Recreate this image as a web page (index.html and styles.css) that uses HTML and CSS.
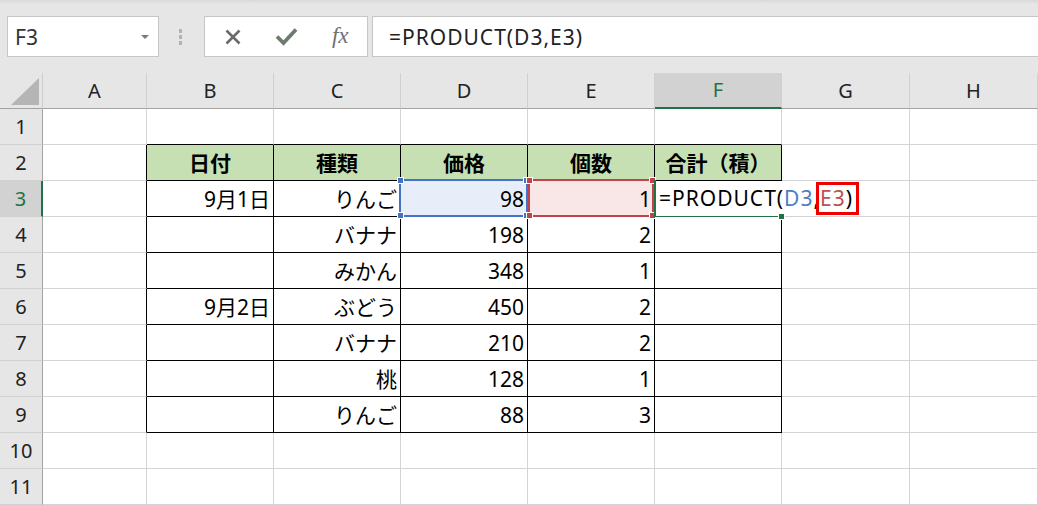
FILE: index.html
```html
<!DOCTYPE html>
<html lang="ja">
<head>
    <meta charset="UTF-8">
    <title>PRODUCT関数</title>
    <link rel="stylesheet" href="styles.css">
</head>
<body>
    <div class="toolbar">
        <div class="namebox">F3<span class="arrow"></span></div>
        <div class="grip"><i></i><i></i><i></i></div>
        <div class="fxbtns">
            <span>
                <svg width="16" height="16" viewBox="0 0 16 16"><path d="M1.5 1.5 L14.5 14.5 M14.5 1.5 L1.5 14.5" stroke="#6b6b6b" stroke-width="2.6" fill="none"/></svg>
            </span>
            <span>
                <svg width="23" height="19" viewBox="0 0 23 19"><path d="M2 9.5 L8.5 16 L21 2.5" stroke="#6e7b6e" stroke-width="3.8" fill="none"/></svg>
            </span>
            <span class="fx">fx</span>
        </div>
        <div class="formula">=PRODUCT(D3,E3)</div>
    </div>

    <div class="sheet">
        <!-- column headers -->
        <div class="corner"></div>
        <div class="ch">A</div>
        <div class="ch">B</div>
        <div class="ch">C</div>
        <div class="ch">D</div>
        <div class="ch">E</div>
        <div class="ch sel">F</div>
        <div class="ch">G</div>
        <div class="ch">H</div>

        <!-- row 1 -->
        <div class="rh">1</div>
        <div class="c"></div>
        <div class="c tt"></div>
        <div class="c tt"></div>
        <div class="c tt"></div>
        <div class="c tt"></div>
        <div class="c tt"></div>
        <div class="c"></div>
        <div class="c"></div>

        <!-- row 2 -->
        <div class="rh">2</div>
        <div class="c tl"></div>
        <div class="c t hd">日付</div>
        <div class="c t hd">種類</div>
        <div class="c t hd">価格</div>
        <div class="c t hd">個数</div>
        <div class="c t hd">合計（積）</div>
        <div class="c"></div>
        <div class="c"></div>

        <!-- row 3 -->
        <div class="rh sel">3</div>
        <div class="c tl"></div>
        <div class="c t">9月1日</div>
        <div class="c t">りんご</div>
        <div class="c t ref ref-d">98<i class="k k1"></i><i class="k k2"></i><i class="k k3"></i><i class="k k4"></i></div>
        <div class="c t ref ref-e">1<i class="k k1"></i><i class="k k2"></i><i class="k k3"></i><i class="k k4"></i></div>
        <div class="c t active">
            <span class="editor">=PRODUCT(<span class="cd">D3</span>,<span class="mark"><span class="ce">E3</span>)</span></span>
            <i class="fill"></i>
        </div>
        <div class="c"></div>
        <div class="c"></div>

        <!-- row 4 -->
        <div class="rh">4</div>
        <div class="c tl"></div>
        <div class="c t"></div>
        <div class="c t">バナナ</div>
        <div class="c t">198</div>
        <div class="c t">2</div>
        <div class="c t"></div>
        <div class="c"></div>
        <div class="c"></div>

        <!-- row 5 -->
        <div class="rh">5</div>
        <div class="c tl"></div>
        <div class="c t"></div>
        <div class="c t">みかん</div>
        <div class="c t">348</div>
        <div class="c t">1</div>
        <div class="c t"></div>
        <div class="c"></div>
        <div class="c"></div>

        <!-- row 6 -->
        <div class="rh">6</div>
        <div class="c tl"></div>
        <div class="c t">9月2日</div>
        <div class="c t">ぶどう</div>
        <div class="c t">450</div>
        <div class="c t">2</div>
        <div class="c t"></div>
        <div class="c"></div>
        <div class="c"></div>

        <!-- row 7 -->
        <div class="rh">7</div>
        <div class="c tl"></div>
        <div class="c t"></div>
        <div class="c t">バナナ</div>
        <div class="c t">210</div>
        <div class="c t">2</div>
        <div class="c t"></div>
        <div class="c"></div>
        <div class="c"></div>

        <!-- row 8 -->
        <div class="rh">8</div>
        <div class="c tl"></div>
        <div class="c t"></div>
        <div class="c t">桃</div>
        <div class="c t">128</div>
        <div class="c t">1</div>
        <div class="c t"></div>
        <div class="c"></div>
        <div class="c"></div>

        <!-- row 9 -->
        <div class="rh">9</div>
        <div class="c tl"></div>
        <div class="c t"></div>
        <div class="c t">りんご</div>
        <div class="c t">88</div>
        <div class="c t">3</div>
        <div class="c t"></div>
        <div class="c"></div>
        <div class="c"></div>

        <!-- row 10 -->
        <div class="rh">10</div>
        <div class="c"></div>
        <div class="c"></div>
        <div class="c"></div>
        <div class="c"></div>
        <div class="c"></div>
        <div class="c"></div>
        <div class="c"></div>
        <div class="c"></div>

        <!-- row 11 -->
        <div class="rh">11</div>
        <div class="c"></div>
        <div class="c"></div>
        <div class="c"></div>
        <div class="c"></div>
        <div class="c"></div>
        <div class="c"></div>
        <div class="c"></div>
        <div class="c"></div>
    </div>
</body>
</html>
```

FILE: styles.css
```css
body {
    margin: 0;
    width: 1038px;
    height: 505px;
    overflow: hidden;
    background-color: #fff;
    font-family: "Noto Sans", "Noto Sans CJK JP", sans-serif;
}

/* formula bar */
.toolbar {
    height: 73px;
    box-sizing: border-box;
    padding: 16px 0 0 7px;
    display: flex;
    align-items: flex-start;
    background: linear-gradient(#d9d9d9, #e6e6e6 4px);
}
.namebox {
    width: 152px;
    height: 41px;
    box-sizing: border-box;
    display: flex;
    align-items: center;
    padding-left: 7px;
    background-color: #fff;
    border: 1px solid #c6c6c6;
    font-size: 21px;
    color: #333;
}
.namebox .arrow {
    margin-left: auto;
    margin-right: 9px;
    border-left: 4px solid transparent;
    border-right: 4px solid transparent;
    border-top: 4px solid #7a7a7a;
}
.grip {
    display: flex;
    flex-direction: column;
    gap: 2px;
    margin: 13px 22px 0 20px;
}
.grip i {
    width: 3px;
    height: 4px;
    background-color: #b3b3b3;
}
.fxbtns {
    width: 164px;
    height: 41px;
    box-sizing: border-box;
    display: flex;
    padding-left: 1px;
    background-color: #fff;
    border: 1px solid #c6c6c6;
}
.fxbtns span {
    flex: 1;
    display: flex;
    align-items: center;
    justify-content: center;
}
.fxbtns .fx {
    font-family: "Liberation Serif", serif;
    font-style: italic;
    font-size: 23px;
    color: #707070;
    padding-bottom: 2px;
}
.formula {
    flex: 1;
    height: 41px;
    box-sizing: border-box;
    margin-left: 4px;
    margin-right: -4px;
    display: flex;
    align-items: center;
    padding-left: 16px;
    background-color: #fff;
    border: 1px solid #c6c6c6;
    font-size: 21px;
    letter-spacing: 1px;
    color: #222;
}

/* sheet */
.sheet {
    display: grid;
    grid-template-columns: 43px 104px 127px 127px 127px 127px 127px 128px 128px;
    grid-template-rows: 36px repeat(11, 36px);
}
.corner, .ch, .rh, .c {
    box-sizing: border-box;
    white-space: nowrap;
}
.corner {
    position: relative;
    background-color: #e6e6e6;
    border-right: 1px solid #cfcfcf;
    border-bottom: 1px solid #a3a3a3;
}
.corner::after {
    content: "";
    position: absolute;
    right: 3px;
    bottom: 3px;
    width: 28px;
    height: 27px;
    background-color: #b5b5b5;
    clip-path: polygon(100% 0, 100% 100%, 0 100%);
}
.ch {
    background-color: #e6e6e6;
    border-right: 1px solid #d0d0d0;
    border-bottom: 1px solid #a3a3a3;
    text-align: center;
    font-size: 20px;
    line-height: 35px;
    color: #222;
}
.ch.sel {
    background-color: #d2d2d2;
    border-bottom: 2px solid #217346;
    line-height: 34px;
    color: #217346;
}
.rh {
    background-color: #e6e6e6;
    border-right: 1px solid #a3a3a3;
    border-bottom: 1px solid #d0d0d0;
    text-align: center;
    font-size: 20px;
    line-height: 35px;
    color: #222;
}
.rh.sel {
    background-color: #d2d2d2;
    border-right: 2px solid #217346;
    color: #217346;
}
.c {
    border-right: 1px solid #d4d4d4;
    border-bottom: 1px solid #d4d4d4;
    padding: 0 3px;
    text-align: right;
    font-size: 21px;
    line-height: 36px;
    color: #000;
}

/* table borders */
.tt {
    border-bottom-color: #000;
}
.tl {
    border-right-color: #000;
}
.t {
    border-right-color: #000;
    border-bottom-color: #000;
}
.hd {
    background-color: #c6e0b4;
    text-align: center;
    font-weight: 700;
}

/* formula reference highlights */
.ref {
    position: relative;
}
.ref::after {
    content: "";
    position: absolute;
    top: -2px;
    bottom: -1px;
    border: 2px solid;
}
.ref-d {
    background-color: #e8eef9;
    color: #000;
}
.ref-d::after {
    left: -2px;
    right: -1px;
    border-color: #4472c4;
}
.ref-e {
    background-color: #f9e7e7;
}
.ref-e::after {
    left: 0;
    right: 0;
    border-color: #c0434a;
}
.k {
    position: absolute;
    z-index: 1;
    width: 5px;
    height: 5px;
    border: 1px solid #fff;
}
.ref-d .k { background-color: #4472c4; }
.ref-e .k { background-color: #c0434a; }
.ref-d .k1 { left: -4px; top: -4px; }
.ref-d .k2 { right: -3px; top: -4px; }
.ref-d .k3 { left: -4px; bottom: -3px; }
.ref-d .k4 { right: -3px; bottom: -3px; }
.ref-e .k1 { left: -2px; top: -4px; }
.ref-e .k2 { right: -2px; top: -4px; }
.ref-e .k3 { left: -2px; bottom: -3px; }
.ref-e .k4 { right: -2px; bottom: -3px; }

/* cell being edited */
.active {
    position: relative;
    z-index: 2;
}
.active::before {
    content: "";
    position: absolute;
    left: -1px;
    right: -1px;
    top: -1px;
    bottom: -1px;
    border-left: 2px solid #217346;
    border-bottom: 2px solid #217346;
}
.editor {
    position: absolute;
    left: 1px;
    top: 0;
    height: 35px;
    padding: 0 10px 0 3px;
    background-color: #fff;
    text-align: left;
    line-height: 35px;
    letter-spacing: 1px;
}
.editor .cd {
    color: #4a7ec8;
}
.editor .ce {
    color: #c0504d;
}
.mark {
    position: relative;
    display: inline-block;
}
.mark::after {
    content: "";
    position: absolute;
    left: -4px;
    right: -6px;
    top: 1px;
    bottom: 1px;
    border: 3px solid #ee0000;
}
.fill {
    position: absolute;
    z-index: 3;
    right: -4px;
    bottom: -4px;
    width: 5px;
    height: 5px;
    background-color: #217346;
    border: 1px solid #fff;
}
```
